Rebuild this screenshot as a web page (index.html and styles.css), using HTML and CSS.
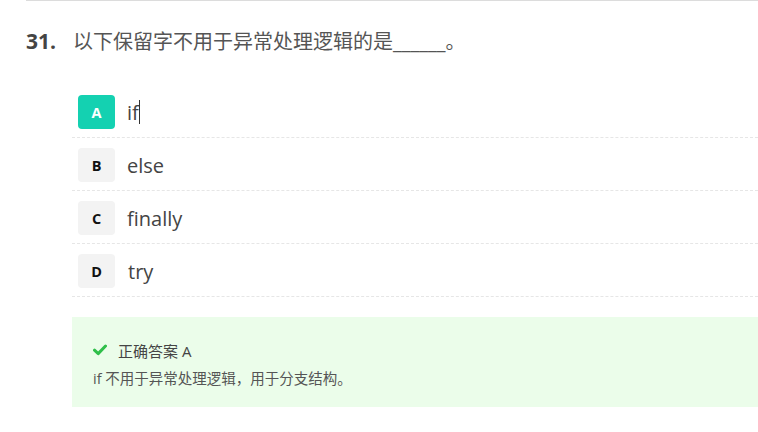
FILE: index.html
```html
<!DOCTYPE html>
<html lang="zh">
<head>
<meta charset="utf-8">
<link rel="stylesheet" href="styles.css">
</head>
<body>
<div class="page">
  <div class="question">
    <div class="title">
      <span class="num">31.</span>
      <span class="stem">以下保留字不用于异常处理逻辑的是______。</span>
    </div>
    <ul class="options">
      <li class="option"><span class="badge badge-on">A</span><span class="text">if<span class="caret"></span></span></li>
      <li class="option"><span class="badge">B</span><span class="text">else</span></li>
      <li class="option"><span class="badge">C</span><span class="text">finally</span></li>
      <li class="option"><span class="badge">D</span><span class="text t-d">try</span></li>
    </ul>
    <div class="answer">
      <div class="answer-head">
        <svg class="check" width="14" height="12" viewBox="0 0 14 12"><path d="M1.5 6.2 L5.2 9.6 L12.5 2" fill="none" stroke="#2fbf4a" stroke-width="3" stroke-linecap="round" stroke-linejoin="round"/></svg>
        <span>正确答案 A</span>
      </div>
      <div class="answer-body">if 不用于异常处理逻辑，用于分支结构。</div>
    </div>
  </div>
</div>
</body>
</html>
```

FILE: styles.css
```css
* { box-sizing: border-box; }
html, body { margin: 0; padding: 0; background: #fff; }
body {
  font-family: "Open Sans", "Noto Sans CJK SC", sans-serif;
  color: #444;
}
.page {
  padding-left: 26px;
}
.question {
  border-top: 1px solid #dcdcdc;
  padding-top: 22px;
}
.title {
  display: flex;
  align-items: baseline;
  height: 37px;
}
.num {
  font-size: 21px;
  font-weight: 700;
  color: #444;
  width: 47px;
  line-height: 37px;
}
.stem {
  font-size: 20px;
  color: #555;
  line-height: 37px;
}
.options {
  list-style: none;
  margin: 35px 0 0 46px;
  padding: 0;
}
.option {
  display: flex;
  align-items: center;
  padding: 10px 0 8px 6px;
  border-bottom: 1px dashed #e6e6e6;
}
.option:first-child {
  padding-top: 0;
}
.badge {
  width: 37px;
  height: 34px;
  border-radius: 4px;
  background: #f3f3f3;
  color: #111;
  font-weight: 700;
  font-size: 14.5px;
  display: flex;
  align-items: center;
  justify-content: center;
  flex: none;
}
.badge-on {
  background: #14d1b1;
  color: #fff;
}
.text {
  margin-left: 12px;
  font-size: 20px;
  color: #444;
  display: inline-flex;
  align-items: center;
}
.t-d { margin-left: 13px; }
.caret {
  display: inline-block;
  width: 1px;
  height: 24px;
  background: #333;
}
.answer {
  margin: 20px 0 0 46px;
  background: #ebfdea;
  height: 90px;
  padding: 25px 0 0 21px;
}
.answer-head {
  display: flex;
  align-items: center;
  font-size: 15px;
  color: #444;
  height: 16px;
}
.check { margin-right: 11px; }
.answer-body {
  margin-top: 9px;
  font-size: 14.5px;
  color: #555;
}
```
